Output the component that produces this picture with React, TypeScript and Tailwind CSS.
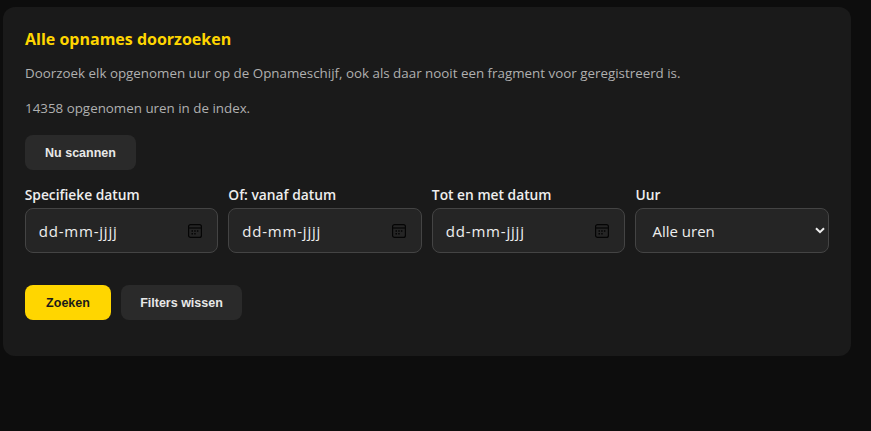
const sans = "font-['Open_Sans','Noto_Sans',sans-serif]";

function CalendarIcon() {
  return (
    <svg className="h-[14px] w-[14px] shrink-0" viewBox="0 0 14 14" fill="none" aria-hidden="true">
      <rect x="0.6" y="0.6" width="12.8" height="12.8" rx="2" stroke="#050505" strokeWidth="1.2" />
      <path d="M1 4h12" stroke="#050505" strokeWidth="1.2" />
      <path d="M3.5 6.2h1.5v1.5H3.5zM6.2 6.2h1.5v1.5H6.2zM8.9 6.2h1.5v1.5H8.9zM3.5 8.9h1.5v1.5H3.5zM6.2 8.9h1.5v1.5H6.2z" fill="#050505" />
    </svg>
  );
}

function DateField({ label }: { label: string }) {
  return (
    <label className="flex flex-col">
      <span className="mb-[3px] text-[13.8px] leading-[20px] font-semibold text-[#eeeeee]">{label}</span>
      <span className="flex h-[45px] items-center justify-between rounded-[8px] border border-[#444444] bg-[#252525] pr-[15px] pl-[13px]">
        <span className="pt-[1px] text-[15px] tracking-[0.8px] text-[#eeeeee]">dd-mm-jjjj</span>
        <CalendarIcon />
      </span>
    </label>
  );
}

export default function App() {
  return (
    <div className={`h-[431px] w-[871px] overflow-hidden bg-[#0d0d0d] pt-[7px] pl-[3px] ${sans}`}>
      <section className="h-[349px] w-[848px] rounded-[12px] bg-[#1a1a1a] px-[22px] pt-[21px]">
        <h2 className="text-[16px] leading-[22px] font-bold text-[#ffd600]">Alle opnames doorzoeken</h2>
        <p className="mt-[13px] text-[13.37px] leading-[20px] text-[#b0b0b0]">
          Doorzoek elk opgenomen uur op de Opnameschijf, ook als daar nooit een fragment voor geregistreerd is.
        </p>
        <p className="mt-[15px] text-[13.37px] leading-[20px] text-[#b0b0b0]">14358 opgenomen uren in de index.</p>
        <button className="mt-[17px] block h-[35px] w-[111px] rounded-[8px] bg-[#2a2a2a] pt-[1px] font-['Liberation_Sans',sans-serif] text-[12.5px] font-bold text-[#e8e8e8]">
          Nu scannen
        </button>
        <div className="mt-[15px] -ml-[0.3px] grid grid-cols-4 gap-x-[10px]">
          <DateField label="Specifieke datum" />
          <DateField label="Of: vanaf datum" />
          <DateField label="Tot en met datum" />
          <label className="flex flex-col">
            <span className="mb-[3px] text-[13.8px] leading-[20px] font-semibold text-[#eeeeee]">Uur</span>
            <span className="relative block">
              <select className="h-[45px] w-full appearance-none rounded-[8px] border border-[#444444] bg-[#252525] pt-[1px] pl-[16px] text-[15px] text-[#eeeeee]">
                <option>Alle uren</option>
              </select>
              <svg className="pointer-events-none absolute top-[19px] right-[4px] h-[7px] w-[10px]" viewBox="0 0 10 7" fill="none" aria-hidden="true">
                <path d="M1 1.2l4 4 4-4" stroke="#eeeeee" strokeWidth="2" />
              </svg>
            </span>
          </label>
        </div>
        <div className="mt-[32px] flex gap-[10px]">
          <button className="h-[35px] w-[86px] rounded-[8px] bg-[#ffd600] pt-[1px] font-['Liberation_Sans',sans-serif] text-[12.5px] font-bold text-[#1a1a1a]">
            Zoeken
          </button>
          <button className="h-[35px] w-[121px] rounded-[8px] bg-[#2a2a2a] pt-[1px] font-['Liberation_Sans',sans-serif] text-[12.5px] font-bold text-[#e8e8e8]">
            Filters wissen
          </button>
        </div>
      </section>
    </div>
  );
}
